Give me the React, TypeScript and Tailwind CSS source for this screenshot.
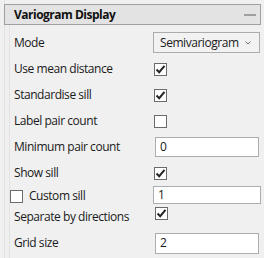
const font = { fontFamily: '"Open Sans", "Noto Sans", sans-serif' };

function Check({ checked, className = "" }: { checked: boolean; className?: string }) {
  return (
    <div className={"w-[13px] h-[13px] border border-[#6b6b6b] bg-white flex items-center justify-center shrink-0 " + className}>
      {checked && (
        <svg width="11" height="11" viewBox="0 0 11 11">
          <path d="M1.5 5.5 L4.2 8.2 L9.5 1.8" fill="none" stroke="#262626" strokeWidth="2" />
        </svg>
      )}
    </div>
  );
}

function TextBox({ value, h = "h-[21px]" }: { value: string; h?: string }) {
  return (
    <div className={"flex-1 bg-white border border-[#abadb3] flex items-center pl-[4px] " + h}>
      <span className="text-[12px] text-[#1a1a1a]">{value}</span>
    </div>
  );
}

function Row({ label, h = "h-[26px]", children }: { label: string; h?: string; children?: React.ReactNode }) {
  return (
    <div className={"flex items-center " + h}>
      <div className="w-[145px] pl-[4px] text-[12px] tracking-[-0.45px] text-[#1a1a1a] whitespace-nowrap">{label}</div>
      {children}
    </div>
  );
}

export default function App() {
  return (
    <div className="w-[264px] h-[258px] bg-[#f0f0f0] overflow-hidden" style={font}>
      <div className="ml-[4px] mr-[3px] pt-[4px] border-l border-[#e2e2e2] h-full">
        <div className="h-[21px] -ml-px bg-[#e3e3e3] border border-[#a0a0a0] flex items-center justify-between pl-[9px] pr-[4px]">
          <span className="text-[12px] font-bold tracking-[-0.5px] text-[#111]">Variogram Display</span>
          <div className="w-[12px] h-[2px] bg-[#a0a0a0]" />
        </div>
        <div className="ml-[4px] mr-[1px] pt-[5px] border-l border-[#e2e2e2]">
          <Row label="Mode">
            <div className="flex-1 h-[21px] -mt-[1px] -ml-[2px] border border-[#acacac] bg-[#f2f2f2] flex items-center justify-between pl-[6px] pr-[8px]">
              <span className="text-[12px] tracking-[-0.45px] text-[#1a1a1a]">Semivariogram</span>
              <svg width="6" height="4" viewBox="0 0 6 4">
                <path d="M0.5 0.5 L3 3 L5.5 0.5" fill="none" stroke="#707070" strokeWidth="1" />
              </svg>
            </div>
          </Row>
          <Row label="Use mean distance">
            <Check checked className="-ml-[1px]" />
          </Row>
          <Row label="Standardise sill">
            <Check checked className="-ml-[1px]" />
          </Row>
          <Row label="Label pair count">
            <Check checked={false} className="-ml-[1px]" />
          </Row>
          <Row label="Minimum pair count">
            <div className="flex-1 flex pr-[1px]">
              <TextBox value="0" h="h-[20px]" />
            </div>
          </Row>
          <Row label="Show sill">
            <Check checked className="-ml-[1px]" />
          </Row>
          <div className="flex items-center h-[20px]">
            <div className="w-[145px] flex items-center">
              <Check checked={false} />
              <span className="ml-[6px] text-[12px] tracking-[-0.45px] text-[#1a1a1a]">Custom sill</span>
            </div>
            <div className="flex-1 flex -mt-[3px] -ml-[2px] -mr-[1px]">
              <TextBox value="1" h="h-[18px]" />
            </div>
          </div>
          <Row label="Separate by directions" h="h-[22px]">
            <Check checked className="self-start mt-[1px]" />
          </Row>
          <Row label="Grid size" h="h-[30px]">
            <div className="flex-1 flex pr-[1px]">
              <TextBox value="2" />
            </div>
          </Row>
        </div>
      </div>
    </div>
  );
}
